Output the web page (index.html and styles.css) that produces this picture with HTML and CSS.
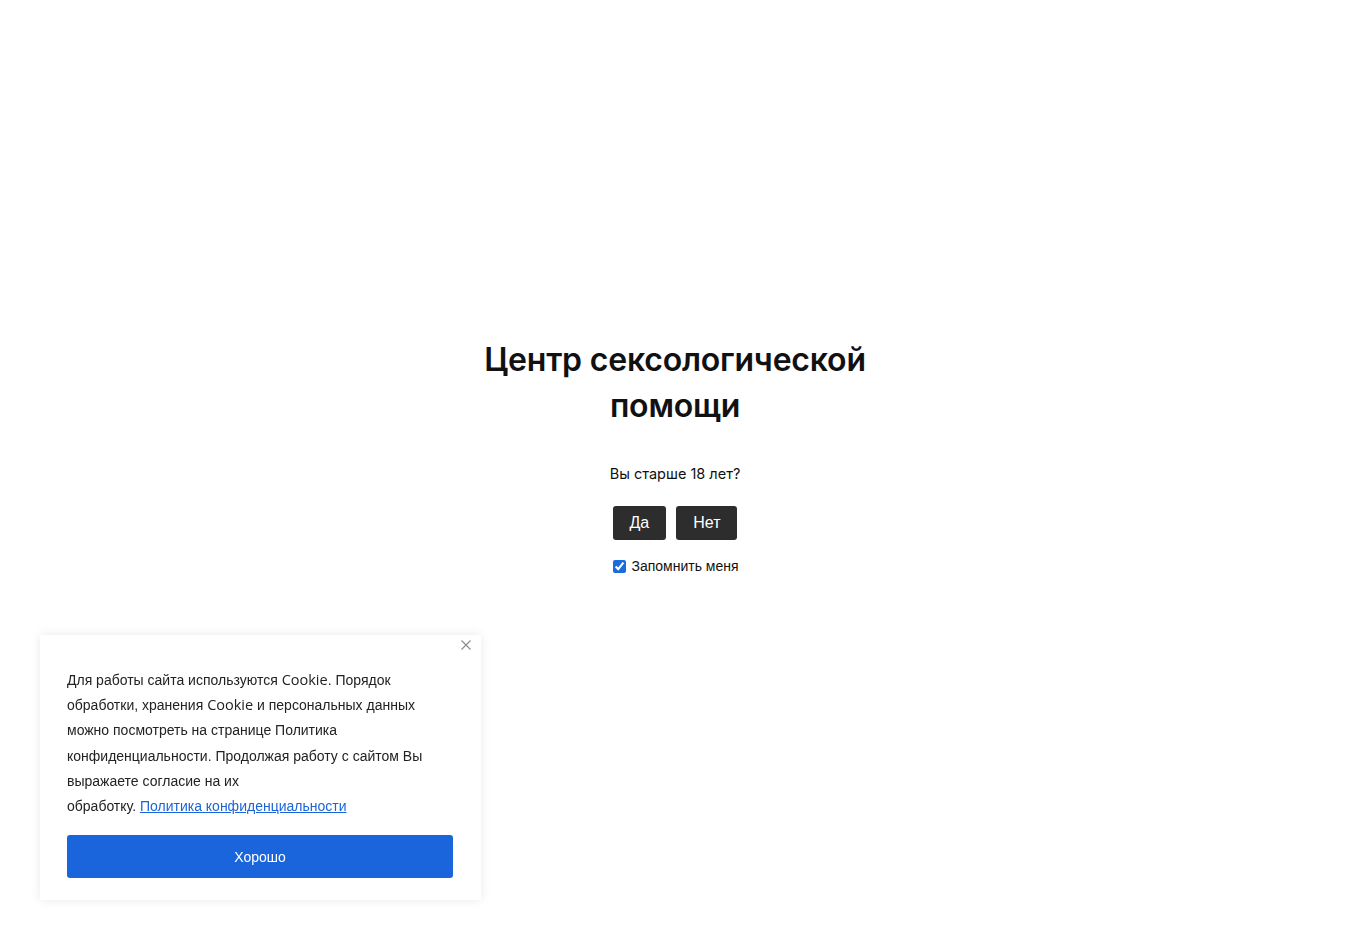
FILE: index.html
```html
<!DOCTYPE html>
<html lang="ru">
<head>
<meta charset="utf-8">
<title>Центр сексологической помощи</title>
<link rel="stylesheet" href="styles.css">
</head>
<body>
<main class="age-gate">
  <h1 class="title">Центр сексологической<br>помощи</h1>
  <p class="question">Вы старше 18 лет?</p>
  <div class="actions">
    <button class="btn">Да</button>
    <button class="btn">Нет</button>
  </div>
  <label class="remember"><input type="checkbox" checked> Запомнить меня</label>
</main>
<aside class="cookie">
  <button class="close" aria-label="Закрыть">
    <svg width="10" height="10" viewBox="0 0 10 10"><path d="M0.5 0.5L9.5 9.5M9.5 0.5L0.5 9.5" stroke="#8a8a8a" stroke-width="1.1" fill="none"/></svg>
  </button>
  <p class="cookie-text">Для работы сайта используются <span class="ck">Cookie</span>. Порядок<br>обработки, хранения <span class="ck">Cookie</span> и персональных данных<br>можно посмотреть на странице Политика<br>конфиденциальности. Продолжая работу с сайтом Вы<br>выражаете согласие на их<br>обработку. <a href="#" class="link">Политика конфиденциальности</a></p>
  <button class="ok">Хорошо</button>
</aside>
</body>
</html>
```
FILE: styles.css
```css
html, body { margin: 0; padding: 0; background: #fff; }
body { font-family: "Liberation Sans", Arial, sans-serif; color: #111; }
.age-gate {
  min-height: 940px;
  display: flex;
  flex-direction: column;
  align-items: center;
  justify-content: flex-start;
  padding-top: 337px;
  box-sizing: border-box;
}
.title {
  margin: 0;
  font-family: Inter, "Noto Sans", sans-serif;
  font-weight: 600;
  font-size: 32px;
  line-height: 46px;
  text-align: center;
  color: #111;
  letter-spacing: -0.2px;
}
.question {
  margin: 35px 0 0;
  font-family: Inter, "Noto Sans", sans-serif;
  font-size: 14.5px;
  line-height: 20px;
  color: #111;
}
.actions { display: flex; gap: 10px; margin-top: 22px; }
.btn {
  height: 34px;
  padding: 0 17px;
  border: 0;
  border-radius: 3px;
  background: #2d2d2d;
  color: #fff;
  font-family: "Liberation Sans", Arial, sans-serif;
  font-size: 16px;
  cursor: pointer;
}
.remember {
  margin-top: 18px;
  margin-left: 2px;
  display: flex;
  align-items: center;
  gap: 5px;
  font-size: 14px;
  color: #111;
}
.remember input { margin: 0; width: 13px; height: 13px; accent-color: #1a6ae0; }
.cookie {
  position: fixed;
  left: 40px;
  top: 635px;
  width: 441px;
  height: 265px;
  box-sizing: border-box;
  padding: 33px 28px 0 27px;
  background: #fff;
  box-shadow: 0 0 10px rgba(0,0,0,0.09);
}
.close {
  position: absolute;
  top: 4px;
  right: 9px;
  width: 12px;
  height: 12px;
  padding: 0;
  border: 0;
  background: transparent;
  display: flex;
  align-items: center;
  justify-content: center;
}
.cookie-text {
  margin: 0;
  font-size: 14px;
  line-height: 25.2px;
  color: #222;
}
.ck { font-family: "Open Sans", sans-serif; font-size: 14.5px; line-height: 1; }
.link { color: #1a64d8; text-decoration: underline; }
.ok {
  display: block;
  margin-top: 16px;
  width: 386px;
  height: 43px;
  border: 0;
  border-radius: 3px;
  background: #1a65db;
  color: #fff;
  font-family: "Liberation Sans", Arial, sans-serif;
  font-size: 14px;
}
```
